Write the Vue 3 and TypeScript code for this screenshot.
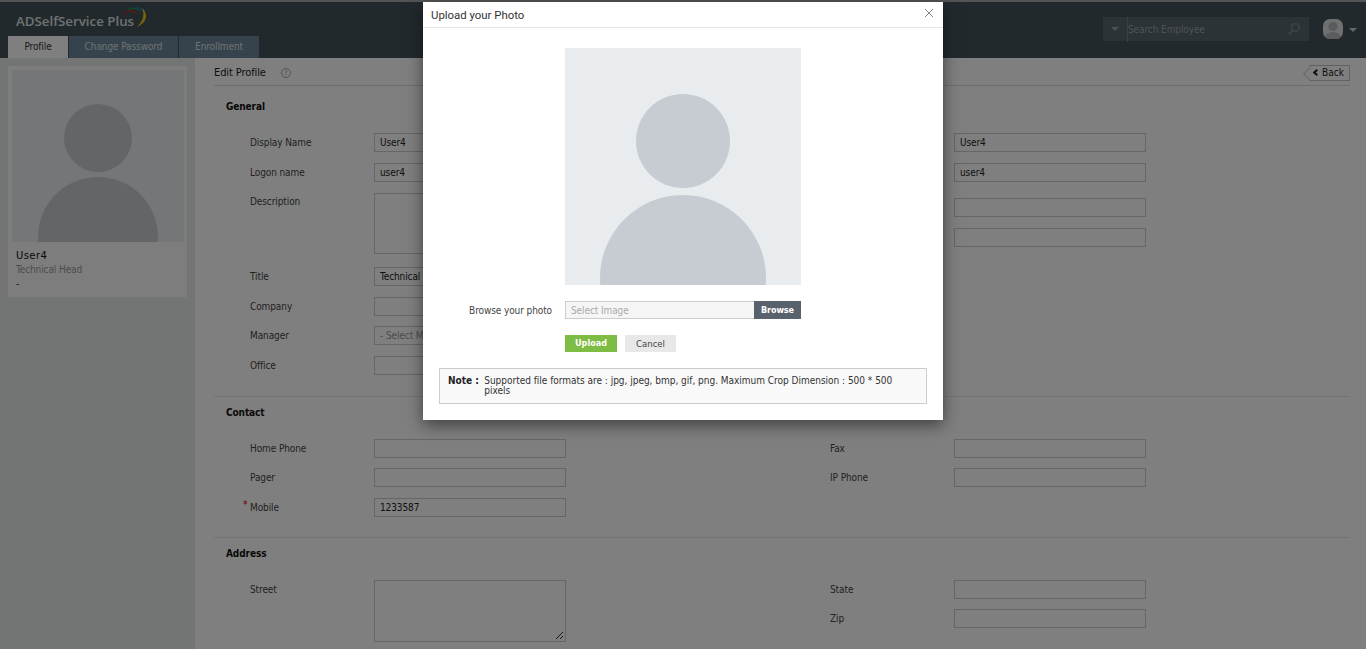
<script setup lang="ts">
import { ref } from "vue";

interface Field {
  label: string
  value?: string
  required?: boolean
  kind?: "text" | "area" | "select"
  spaced?: boolean
}

interface Section {
  title: string
  left: Field[]
  right: Field[]
}

const tabs = ["Profile", "Change Password", "Enrollment"]
const activeTab = ref<string>("Profile")

const sections: Section[] = [
  {
    title: "General",
    left: [
      { label: "Display Name", value: "User4" },
      { label: "Logon name", value: "user4" },
      { label: "Description", kind: "area" },
      { label: "Title", value: "Technical Head" },
      { label: "Company" },
      { label: "Manager", value: "- Select Manager -", kind: "select" },
      { label: "Office" },
    ],
    right: [
      { label: "", value: "User4" },
      { label: "", value: "user4" },
      { label: "", spaced: true },
      { label: "" },
    ],
  },
  {
    title: "Contact",
    left: [
      { label: "Home Phone" },
      { label: "Pager" },
      { label: "Mobile", value: "1233587", required: true },
    ],
    right: [{ label: "Fax" }, { label: "IP Phone" }],
  },
  {
    title: "Address",
    left: [{ label: "Street", kind: "area" }],
    right: [{ label: "State" }, { label: "Zip" }],
  },
]
</script>

<template>
  <div class="page">
    <header class="top">
      <div class="brand-row">
        <div class="brand">
          <span>ADSelfService Plus</span>
          <svg class="swoosh" width="26" height="22" viewBox="0 0 26 22">
            <path d="M1 8 C5 3 10 3 14 6" fill="none" stroke="#c0272d" stroke-width="1.5" />
            <path d="M5 3 C9 0 14 1 17 4" fill="none" stroke="#2e8b3c" stroke-width="1.5" />
            <path d="M12 1 C16 0 19 2 21 6" fill="none" stroke="#1f6fc4" stroke-width="1.5" />
            <path d="M19 1 C25 6 25 15 14 20 C20 14 22 8 19 1 Z" fill="#f2c811" />
          </svg>
        </div>
        <div class="tools">
          <div class="search">
            <span class="caret"></span>
            <span class="search-text">Search Employee</span>
            <svg width="14" height="14" viewBox="0 0 14 14" class="lens">
              <circle cx="8.5" cy="5.5" r="3.8" fill="none" stroke="#7a8488" stroke-width="1.6" />
              <path d="M5.8 8.2 L2 12" stroke="#7a8488" stroke-width="2.2" />
            </svg>
          </div>
          <svg class="me" width="20" height="20" viewBox="0 0 20 20">
            <defs>
              <clipPath id="meclip"><rect width="20" height="20" rx="7" /></clipPath>
            </defs>
            <g clip-path="url(#meclip)">
              <rect width="20" height="20" fill="#dfe1e3" />
              <circle cx="10" cy="7.5" r="4.6" fill="#b4b8bb" />
              <ellipse cx="10" cy="19" rx="8" ry="6" fill="#b4b8bb" />
            </g>
          </svg>
          <span class="caret light"></span>
        </div>
      </div>
      <nav class="tabs">
        <a v-for="t in tabs" :key="t" class="tab" :class="{ active: t === activeTab }" @click="activeTab = t">{{ t }}</a>
      </nav>
    </header>

    <div class="body">
      <aside class="side">
        <div class="card">
          <svg class="photo" viewBox="0 0 172 172" width="172" height="172">
            <rect width="172" height="172" fill="#e9ecef" />
            <circle cx="86" cy="68" r="34" fill="#c6ccd2" />
            <ellipse cx="86" cy="167" rx="60" ry="60" fill="#c6ccd2" />
          </svg>
          <div class="who">
            <div class="name">User4</div>
            <div class="role">Technical Head</div>
            <div class="dash">-</div>
          </div>
        </div>
      </aside>

      <main class="main">
        <div class="title-row">
          <h1>Edit Profile</h1>
          <span class="help">?</span>
          <button class="back"><span class="chev"></span>Back</button>
        </div>

        <section v-for="s in sections" :key="s.title" class="section">
          <h2>{{ s.title }}</h2>
          <div class="cols">
            <div v-for="(col, i) in [s.left, s.right]" :key="i" class="col">
              <div v-for="(f, j) in col" :key="j" class="row" :class="{ tall: f.kind === 'area', spaced: f.spaced }">
                <label><i v-if="f.required" class="req">*</i>{{ f.label }}</label>
                <div class="control" :class="{ area: f.kind === 'area', muted: f.kind === 'select' }">
                  {{ f.value }}
                  <svg v-if="f.kind === 'area'" class="grip" width="9" height="9" viewBox="0 0 9 9">
                    <path d="M1 8 L8 1 M5 8 L8 5" stroke="#333" stroke-width="1" />
                  </svg>
                </div>
              </div>
            </div>
          </div>
        </section>
      </main>
    </div>

    <div class="overlay"></div>

    <div class="modal">
      <div class="modal-head">
        <span>Upload your Photo</span>
        <svg class="close" width="8" height="8" viewBox="0 0 8 8">
          <path d="M0 0 L8 8 M8 0 L0 8" stroke="#888" stroke-width="1" />
        </svg>
      </div>
      <div class="modal-body">
        <svg class="preview" viewBox="0 0 236 237" width="236" height="237">
          <rect width="236" height="237" fill="#e9ecef" />
          <circle cx="118" cy="93" r="47" fill="#c6ccd2" />
          <circle cx="118" cy="230" r="83" fill="#c6ccd2" />
        </svg>
        <div class="browse-row">
          <span class="browse-label">Browse your photo</span>
          <div class="picker">
            <span class="picker-text">Select Image</span>
            <span class="picker-btn">Browse</span>
          </div>
        </div>
        <div class="actions">
          <button class="upload">Upload</button>
          <button class="cancel">Cancel</button>
        </div>
        <div class="note">
          <b>Note :</b>
          <span>Supported file formats are : jpg, jpeg, bmp, gif, png. Maximum Crop Dimension : 500 * 500 pixels</span>
        </div>
      </div>
    </div>
  </div>
</template>

<style>
html, body {
  margin: 0;
  overflow: hidden;
}
</style>

<style scoped>
* {
  box-sizing: border-box;
}

.page {
  position: relative;
  width: 1366px;
  height: 649px;
  overflow: hidden;
  background: #fff;
  font-family: "DejaVu Sans Condensed", "DejaVu Sans", Verdana, sans-serif;
  font-stretch: condensed;
  font-size: 10px;
  letter-spacing: -0.1px;
  color: #333;
}

.top {
  height: 58px;
  background: #44525a;
  border-top: 2px solid #a8a8a8;
  display: flex;
  flex-direction: column;
}

.brand-row {
  display: flex;
  justify-content: space-between;
  height: 34px;
  padding: 3px 0 0 16px;
}

.brand {
  display: flex;
  align-items: flex-start;
  font-family: "Open Sans", "DejaVu Sans", sans-serif;
  font-stretch: normal;
  letter-spacing: 0;
  font-size: 13.3px;
  font-weight: 600;
  color: #dfe2e4;
  padding-top: 7px;
}

.swoosh {
  margin: -5px 0 0 -11px;
}

.tools {
  display: flex;
  align-items: center;
  height: 24px;
  margin-top: 12px;
  padding-right: 9px;
}

.search {
  width: 206px;
  height: 24px;
  background: #56666c;
  display: flex;
  align-items: center;
  margin-right: 14px;
}

.caret {
  width: 0;
  height: 0;
  border: 4px solid transparent;
  border-top: 4px solid #9aa1a5;
  border-bottom: 0;
  margin: 0 8px;
}

.caret.light {
  margin: 2px 0 0 6px;
  border-top-color: #d0d0d0;
}

.search-text {
  flex: 1;
  border-left: 1px solid #74808a;
  color: #9ea4a8;
  line-height: 24px;
  padding-top: 1px;
}

.lens {
  margin-right: 8px;
}

.tabs {
  display: flex;
  gap: 1px;
  padding-left: 8px;
}

.tab {
  width: 109px;
  height: 22px;
  line-height: 22px;
  text-align: center;
  background: #6c8698;
  color: #dfe3e6;
}

.tab:first-child {
  width: 60px;
}

.tab:last-child {
  width: 80px;
}

.tab.active {
  background: #fff;
  color: #333;
}

.body {
  display: flex;
  height: 591px;
}

.side {
  width: 195px;
  flex-shrink: 0;
  background: #e7ebea;
  padding: 8px;
}

.card {
  width: 179px;
  height: 231px;
  background: #f9faf9;
  padding: 4px;
}

.photo {
  display: block;
}

.who {
  padding: 7px 4px;
  line-height: 14px;
}

.name {
  font-family: "DejaVu Sans", sans-serif;
  font-stretch: normal;
  color: #111;
  letter-spacing: .4px;
}

.role {
  color: #999;
}

.main {
  flex: 1;
  padding: 6px 16px 0 19px;
  background: #fff;
}

.title-row {
  display: flex;
  align-items: center;
  height: 22px;
  border-bottom: 1px solid #ddd;
  padding-bottom: 4px;
}

h1 {
  margin: 0;
  font-size: 11px;
  font-weight: 400;
  color: #222;
}

.help {
  width: 10px;
  height: 10px;
  margin-left: 15px;
  border: 1px solid #aaa;
  border-radius: 50%;
  font-size: 7px;
  line-height: 8px;
  text-align: center;
  color: #999;
}

.back {
  position: relative;
  margin-left: auto;
  width: 41px;
  height: 16px;
  padding: 0;
  border: 1px solid #c4c4c4;
  border-left: 0;
  background: #fff;
  font: inherit;
  color: #222;
}

.back::before {
  content: "";
  position: absolute;
  left: -5px;
  top: 2px;
  width: 11px;
  height: 11px;
  border-left: 1px solid #c4c4c4;
  border-bottom: 1px solid #c4c4c4;
  transform: rotate(45deg) scale(.8);
  background: #fff;
}

.chev {
  position: relative;
  display: inline-block;
  width: 5px;
  height: 5px;
  border-left: 2px solid #222;
  border-bottom: 2px solid #222;
  transform: rotate(45deg);
  margin-right: 3px;
  vertical-align: 1px;
}

.section {
  border-bottom: 1px solid #e8e8e8;
  padding: 0 0 20px 12px;
}

.section:first-of-type {
  padding: 5px 0 21px 12px;
}

.section:last-child {
  border-bottom: 0;
}

h2 {
  margin: 0;
  padding: 10px 0 20px;
  font-size: 10px;
  line-height: 12px;
  font-weight: 700;
  color: #111;
}

.cols {
  display: grid;
  grid-template-columns: 580px 340px;
}

.col {
  padding-left: 24px;
  display: flex;
  flex-direction: column;
  gap: 10.5px;
}

.row {
  display: flex;
  align-items: center;
}

.row.tall {
  align-items: flex-start;
}

.row + .row.tall {
  margin-top: .5px;
}

.row.tall + .row {
  margin-top: 3px;
}

.row.spaced {
  margin-top: 6px;
}

.row label {
  width: 124px;
  position: relative;
  color: #444;
}

.row.tall label {
  padding-top: 4px;
}

.section:first-of-type .row.tall label {
  padding-top: 3px;
}

.req {
  position: absolute;
  left: -7px;
  top: -3px;
  color: #d0021b;
  font-style: normal;
}

.control {
  position: relative;
  width: 192px;
  height: 19px;
  border: 1px solid #ccc;
  padding: 0 5px;
  line-height: 17px;
  color: #222;
  white-space: nowrap;
  overflow: hidden;
}

.control.area {
  height: 62px;
}

.section:first-of-type .control.area {
  height: 61px;
}

.control.muted {
  color: #999;
}

.grip {
  position: absolute;
  right: 1px;
  bottom: 1px;
}

.overlay {
  position: absolute;
  inset: 0;
  background: rgba(0, 0, 0, .5);
}

.modal {
  position: absolute;
  left: 423px;
  top: 2px;
  width: 520px;
  height: 418px;
  background: #fff;
  box-shadow: 0 5px 15px rgba(0, 0, 0, .5);
}

.modal-head {
  height: 26px;
  border-bottom: 1px solid #e5e5e5;
  display: flex;
  justify-content: space-between;
  padding: 6px 10px 0 8px;
  font-family: Roboto, sans-serif;
  font-stretch: normal;
  letter-spacing: 0;
  font-size: 11.4px;
  color: #333;
}

.close {
  margin-top: 1px;
}

.modal-body {
  padding: 20px 16px 0;
  display: flex;
  flex-direction: column;
}

.preview {
  display: block;
  margin-left: 126px;
}

.browse-row {
  display: flex;
  align-items: center;
  margin-top: 16px;
}

.browse-label {
  width: 113px;
  margin-right: 13px;
  text-align: right;
  color: #444;
}

.picker {
  width: 236px;
  height: 18px;
  display: flex;
  border: 1px solid #ccc;
  background: #f5f5f5;
}

.picker-text {
  flex: 1;
  padding-left: 5px;
  line-height: 17px;
  color: #aaa;
}

.picker-btn {
  width: 47px;
  margin: -1px -1px -1px 0;
  background: #57626c;
  color: #fff;
  font-size: 9px;
  font-weight: 700;
  text-align: center;
  line-height: 18px;
}

.actions {
  display: flex;
  gap: 8px;
  margin: 16px 0 16px 126px;
}

.actions button {
  height: 17px;
  border: 0;
  padding: 0 0 1px;
  font: inherit;
}

.upload {
  width: 52px;
  background: #7fbc44;
  color: #fff;
  font-size: 9px !important;
  font-weight: 700 !important;
}

.cancel {
  width: 51px;
  background: #e8e8e8;
  color: #444;
  font-size: 9.5px !important;
}

.note {
  width: 488px;
  height: 36px;
  border: 1px solid #ccc;
  background: #f9f9f9;
  display: flex;
  gap: 5.5px;
  padding: 7px 30px 0 8px;
  line-height: 10px;
  letter-spacing: -0.02px;
  color: #333;
}

.note b {
  flex-shrink: 0;
  color: #222;
}
</style>
